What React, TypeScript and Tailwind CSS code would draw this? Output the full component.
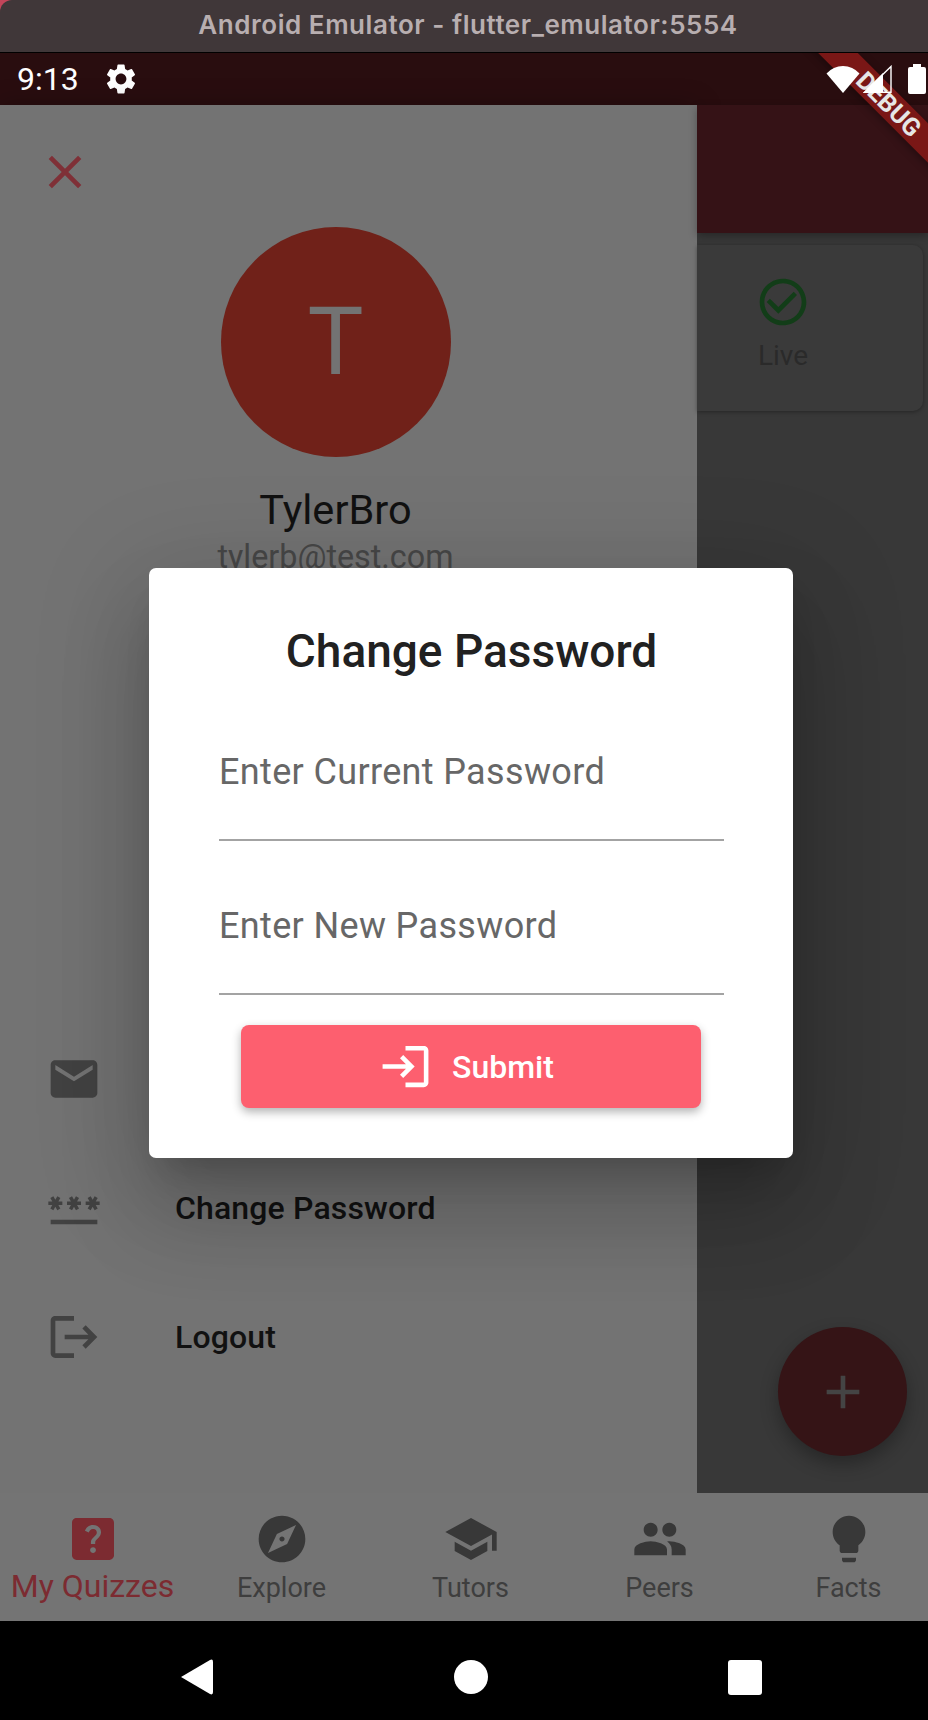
import React from "react";
import {
  MdSettings, MdClose, MdEmail, MdPassword, MdOutlineLogin, MdAdd,
  MdCheckCircleOutline, MdHelpCenter, MdExplore, MdSchool, MdPeople, MdLightbulb,
} from "react-icons/md";

function MenuRow({ icon, label }: { icon: React.ReactNode; label?: string }) {
  return (
    <div className="flex h-[129px] items-center pl-[46px]">
      <div className="w-[129px] shrink-0 text-[#424242]">{icon}</div>
      {label ? <span className="text-[32px] font-medium leading-[40px] tracking-[0.15px] text-[#111111]">{label}</span> : null}
    </div>
  );
}

function NavItem({ icon, label, active }: { icon: React.ReactNode; label: string; active?: boolean }) {
  return (
    <div className={active ? "flex flex-col items-center text-[#7c2b31]" : "flex flex-col items-center text-[#383838]"}>
      {icon}
      <span className={active ? "text-[32px] leading-[38px] whitespace-nowrap" : "mt-[1px] text-[27px] leading-[40px] whitespace-nowrap text-[#3e3e3e]"}>{label}</span>
    </div>
  );
}

export default function App() {
  return (
    <div className="relative flex h-[1720px] w-[928px] flex-col overflow-hidden bg-black font-['Roboto',sans-serif]">
      {/* Emulator title bar */}
      <div className="bg-[#c2455a]">
        <div className="flex h-[53px] items-center justify-center rounded-tl-[12px] border-b border-black bg-[#403739] pb-[3px] pl-[8px] font-['Inter',sans-serif] text-[26px] font-semibold tracking-[0.55px] text-[#b8aeb0]">
          Android Emulator - flutter_emulator:5554
        </div>
      </div>

      {/* Status bar */}
      <div className="flex h-[52px] items-center bg-[#290d0f] pl-[17px] pr-[2px] text-white">
        <span className="w-[86px] text-[32px] leading-[40px]">9:13</span>
        <MdSettings className="h-[36px] w-[36px] text-white" />
        <div className="relative z-20 ml-auto flex items-center">
          <svg viewBox="0 0 34 27" className="h-[27px] w-[34px]">
            <path d="M17 27 L0.5 7.5 A22 22 0 0 1 33.5 7.5 Z" fill="#fff" />
          </svg>
          <svg viewBox="0 0 29 28" className="ml-[3px] h-[28px] w-[29px]">
            <path d="M28 1.5 V27.2 H1.5 Z" fill="none" stroke="#fff" strokeWidth="1.4" />
            <path d="M0 28 L20 8 V28 Z" fill="#fff" />
          </svg>
          <svg viewBox="0 0 18 30" className="ml-[16px] h-[30px] w-[18px]">
            <path d="M5 0 H13 V3 H16 A2 2 0 0 1 18 5 V28 A2 2 0 0 1 16 30 H2 A2 2 0 0 1 0 28 V5 A2 2 0 0 1 2 3 H5 Z" fill="#fff" />
          </svg>
        </div>
      </div>

      {/* Main area */}
      <div className="flex h-[1388px]">
        <div className="flex w-[697px] shrink-0 flex-col bg-[#737373] shadow-[0_0_24px_rgba(0,0,0,.25)]">
          <MdClose className="ml-[37px] mt-[39px] h-[56px] w-[56px] text-[#7f3037]" />
          <div className="flex w-[671px] flex-col items-center">
            <div className="mt-[27px] flex h-[230px] w-[230px] items-center justify-center rounded-full bg-[#702119] text-[94px] leading-none text-[#737373]">
              T
            </div>
            <div className="mt-[28px] text-[41.5px] leading-[50px] text-[#111111]">TylerBro</div>
            <div className="text-[32.3px] leading-[44px] text-[#474747]">tylerb@test.com</div>
          </div>
          <div className="mt-[435px]">
            <MenuRow icon={<MdEmail className="h-[56px] w-[56px]" />} />
            <MenuRow icon={<MdPassword className="h-[56px] w-[56px]" />} label="Change Password" />
            <MenuRow
              icon={
                <svg viewBox="0 0 24 24" fill="currentColor" className="h-[56px] w-[56px]">
                  <path d="M17 7l-1.41 1.41L18.17 11H8v2h10.17l-2.58 2.58L17 17l5-5zM4 5h8V3H4c-1.1 0-2 .9-2 2v14c0 1.1.9 2 2 2h8v-2H4V5z" />
                </svg>
              }
              label="Logout"
            />
          </div>
        </div>

        <div className="flex flex-1 flex-col bg-[#383838]">
          <div className="h-[128px] bg-[#351216] shadow-[0_3px_8px_rgba(0,0,0,.3)]" />
          <div className="mr-[5px] mt-[12px] flex h-[166px] rounded-br-[10px] rounded-tr-[10px] bg-[#3a3a3a] shadow-[0_1px_4px_rgba(0,0,0,.35)]">
            <div className="flex w-[172px] flex-col items-center pt-[29px] text-[#2a2a2a]">
              <MdCheckCircleOutline className="h-[56px] w-[56px] text-[#123d18]" />
              <span className="mt-[6px] text-[28px] leading-[40px]">Live</span>
            </div>
          </div>
        </div>
      </div>

      {/* Bottom navigation */}
      <div className="-ml-[2px] grid h-[128px] w-[932px] grid-cols-[repeat(5,189px)] bg-[#747474] pt-[18px]">
        <NavItem active label="My Quizzes" icon={<MdHelpCenter className="h-[56px] w-[56px]" />} />
        <NavItem label="Explore" icon={<MdExplore className="h-[56px] w-[56px]" />} />
        <NavItem label="Tutors" icon={<MdSchool className="h-[56px] w-[56px]" />} />
        <NavItem label="Peers" icon={<MdPeople className="h-[56px] w-[56px]" />} />
        <NavItem label="Facts" icon={<MdLightbulb className="h-[56px] w-[56px]" />} />
      </div>

      {/* Android navigation bar */}
      <div className="flex flex-1 items-center justify-center pl-[13px] pt-[13px]">
        <div className="grid w-[822px] grid-cols-3 items-center justify-items-center">
          <svg viewBox="0 0 34 38" className="h-[38px] w-[34px]">
            <path d="M30 2 L1 19 L30 36 Q33 37.5 33 34 V4 Q33 0.5 30 2 Z" fill="#fff" />
          </svg>
          <div className="h-[34px] w-[34px] rounded-full bg-white" />
          <div className="h-[35px] w-[34px] rounded-[3px] bg-white" />
        </div>
      </div>

      {/* FAB */}
      <div className="absolute left-[778px] top-[1327px] flex h-[129px] w-[129px] items-center justify-center rounded-full bg-[#351416] text-[#444444] shadow-[0_8px_18px_rgba(0,0,0,.3)]">
        <MdAdd className="h-[56px] w-[56px]" />
      </div>

      {/* Debug banner */}
      <div className="pointer-events-none absolute left-[718px] top-[53px] z-10 h-[210px] w-[210px] overflow-hidden">
        <div className="absolute left-[21px] top-[37px] flex h-[28px] w-[300px] rotate-45 items-center justify-center bg-[#7a1716] text-[25px] font-bold leading-none text-[#e6e6e6] shadow-[0_2px_8px_rgba(0,0,0,.35)]">
          DEBUG
        </div>
      </div>

      {/* Dialog */}
      <div className="absolute left-[149px] top-[568px] z-30 flex h-[590px] w-[644px] flex-col rounded-[7px] bg-white pl-[70px] pr-[69px] pt-[59px] shadow-[0_56px_88px_7px_rgba(0,0,0,.14),0_21px_107px_18px_rgba(0,0,0,.12),0_25px_35px_-16px_rgba(0,0,0,.2)]">
        <div className="text-center text-[46px] font-medium leading-[48px] text-[#212121]">Change Password</div>
        <div className="mt-[75px] border-b-2 border-[#a3a3a3] pb-[45px] text-[36px] leading-[44px] tracking-[0.35px] text-[#676767]">Enter Current Password</div>
        <div className="mt-[63px] border-b-2 border-[#a3a3a3] pb-[45px] text-[36px] leading-[44px] tracking-[0.35px] text-[#676767]">Enter New Password</div>
        <div className="ml-[22px] mr-[23px] mt-[30px] flex h-[83px] items-center justify-center gap-[19px] rounded-[8px] bg-[#fd5f6f] pr-[10px] text-white shadow-[0_4px_10px_rgba(0,0,0,.3)]">
          <MdOutlineLogin className="h-[55px] w-[55px]" />
          <span className="text-[32px] font-medium leading-[40px]">Submit</span>
        </div>
      </div>
    </div>
  );
}
